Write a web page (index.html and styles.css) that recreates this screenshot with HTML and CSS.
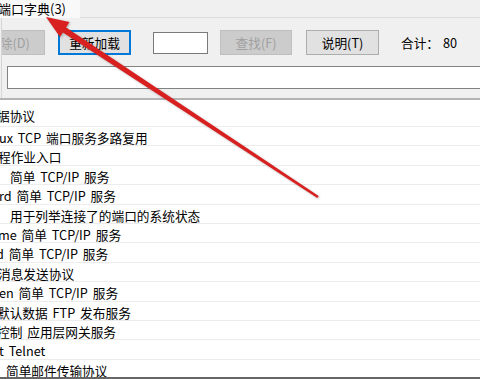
FILE: index.html
```html
<!DOCTYPE html>
<html lang="zh-CN">
<head>
  <meta charset="UTF-8" />
  <title>端口字典</title>
  <link rel="stylesheet" href="styles.css">
</head>
<body>

  <!-- Tab strip -->
  <div class="tabs">
    <div class="tab">端口字典(3)</div>
    <div class="tabs-rest"></div>
  </div>

  <!-- Toolbar panel -->
  <div class="panel">
    <div class="toolbar">
      <button class="btn disabled first">删除(D)</button>
      <button class="btn focused reload">重新加载</button>
      <input type="text" class="search" />
      <button class="btn disabled find">查找(F)</button>
      <button class="btn help">说明(T)</button>
      <span class="total">合计：<b>80</b></span>
    </div>
    <input type="text" class="filter" />
  </div>

  <!-- Port list -->
  <div class="list">
    <div class="row top i-3">据协议</div>
    <div class="row i-1">ux TCP 端口服务多路复用</div>
    <div class="row i-2">程作业入口</div>
    <div class="row i10">简单 TCP/IP 服务</div>
    <div class="row i-1">rd 简单 TCP/IP 服务</div>
    <div class="row i10">用于列举连接了的端口的系统状态</div>
    <div class="row i-2">me 简单 TCP/IP 服务</div>
    <div class="row i-4">d 简单 TCP/IP 服务</div>
    <div class="row i-2">消息发送协议</div>
    <div class="row i-1">en 简单 TCP/IP 服务</div>
    <div class="row i-3">默认数据 FTP 发布服务</div>
    <div class="row i-3">控制 应用层网关服务</div>
    <div class="row i-1">t Telnet</div>
    <div class="row i6">简单邮件传输协议</div>
  </div>

  <!-- Annotation arrow -->
  <svg class="arrow" width="480" height="379" viewBox="0 0 480 379">
    <polygon points="317.3,198 318.7,196 64.6,26.6 61.4,31.4" fill="#d7201f"/>
    <polygon points="46,17 69.5,22 60,37" fill="#d7201f"/>
  </svg>

</body>
</html>
```

FILE: styles.css
```css
body {
  margin: 0;
  width: 480px;
  height: 379px;
  overflow: hidden;
  position: relative;
  background: #f0f0f0;
  font-family: "Noto Sans CJK SC", sans-serif;
  font-size: 12.7px;
  color: #000;
}

.tabs {
  display: flex;
  height: 18px;
}

.tab {
  width: 80px;
  background: #f9f9f9;
  font-size: 13px;
  line-height: 17px;
  text-indent: -2px;
  white-space: nowrap;
  overflow: hidden;
}

.tabs-rest {
  flex: 1;
  border-bottom: 1px solid #dcdcdc;
}

.panel {
  height: 80px;
  margin-left: 1px;
  border-left: 1px solid #d5d5d5;
  box-sizing: border-box;
  padding-top: 12px;
  overflow: hidden;
}

.toolbar {
  display: flex;
  align-items: center;
  height: 25px;
}

.btn {
  width: 73px;
  height: 25px;
  padding: 0;
  box-sizing: border-box;
  border: 1px solid #adadad;
  background: #e1e1e1;
  font-family: inherit;
  font-size: 12.7px;
  color: #000;
  flex-shrink: 0;
}

.btn.disabled {
  background: #cccccc;
  border-color: #bfbfbf;
  color: #a0a0a0;
}

.btn.focused {
  border: 2px solid #0078d7;
}

.first { margin-left: -30px; }
.reload { margin-left: 13px; }
.find { margin-left: 12px; width: 72px; }
.help { margin-left: 14px; }

.search {
  width: 55px;
  height: 22px;
  margin-left: 22px;
  box-sizing: border-box;
  border: 1px solid #7a7a7a;
  background: #fff;
  flex-shrink: 0;
}

.total {
  margin-left: 22px;
  white-space: nowrap;
}

.total b {
  font-weight: normal;
  margin-left: 4px;
}

.filter {
  display: block;
  width: 490px;
  height: 23px;
  margin: 11px 0 0 5px;
  box-sizing: border-box;
  border: 1px solid #828282;
  background: #fff;
}

.list {
  height: 281px;
  box-sizing: border-box;
  background: #fff;
  border-top: 2px solid #b4b4b4;
  border-bottom: 2px solid #666;
  overflow: hidden;
}

.row {
  height: 19.42px;
  box-sizing: border-box;
  border-bottom: 1px solid #ececec;
  line-height: 19px;
  padding-top: 1px;
  word-spacing: 2px;
  white-space: nowrap;
}

.row.top {
  height: 27px;
  padding-top: 6px;
}

.i-4 { text-indent: -4px; }
.i-3 { text-indent: -3px; }
.i-2 { text-indent: -2px; }
.i-1 { text-indent: -1px; }
.i6 { text-indent: 6px; }
.i10 { text-indent: 10px; }

.arrow {
  position: absolute;
  top: 0;
  left: 0;
  pointer-events: none;
  filter: drop-shadow(1px 1px 1px rgba(0, 0, 0, 0.25));
}
```
